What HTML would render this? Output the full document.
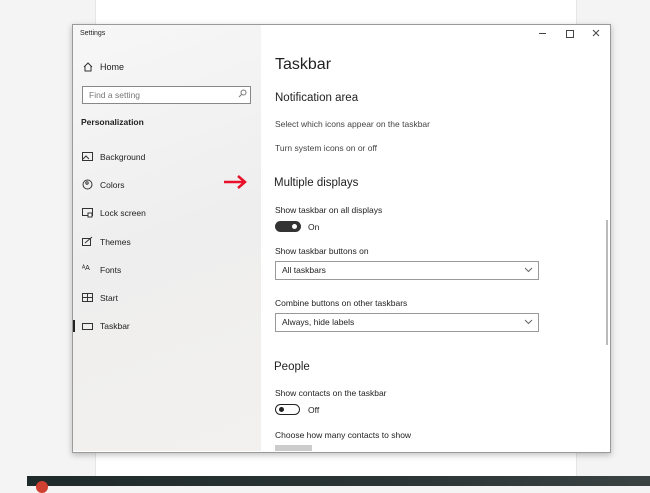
<!DOCTYPE html><html><head><style>
body{margin:0;width:650px;height:486px;background:#f4f4f4;position:relative;overflow:hidden;font-family:"Liberation Sans",sans-serif;color:#222}
.a{position:absolute}
.t{position:absolute;font-size:9px;white-space:nowrap}
</style></head><body>
<div class="a" style="left:95px;top:0;width:480px;height:476px;background:#fff;border-left:1px solid #e6e6e6;border-right:1px solid #e6e6e6"></div>
<div class="a" style="left:27px;top:476px;width:623px;height:10px;background:linear-gradient(90deg,#1f2a2a,#2b3535 60%,#3a4242)"></div>
<div class="a" style="left:36px;top:481px;width:12px;height:12px;border-radius:50%;background:#d04030"></div>
<div class="a" style="left:72px;top:24px;width:537px;height:427px;background:#fff;border:1px solid #9a9a9a;box-shadow:0 2px 6px rgba(0,0,0,.25)"></div>
<div class="a" style="left:73px;top:25px;width:188px;height:426px;background:linear-gradient(160deg,#f7f7f7,#eeeeee 50%,#f3f1ef)"></div>
<div class="t" style="left:80px;top:30px;font-size:7px">Settings</div>
<div class="a" style="left:539px;top:33px;width:7px;height:1px;background:#444"></div>
<div class="a" style="left:566px;top:30px;width:6px;height:6px;border:1px solid #444"></div>
<svg class="a" style="left:592px;top:29px" width="8" height="8"><path d="M1 1L7 7M7 1L1 7" stroke="#444"/></svg>
<svg class="a" style="left:83px;top:62px" width="10" height="10"><path d="M1 5 L5 1 L9 5 M2 4 V9 H8 V4" fill="none" stroke="#333"/></svg>
<div class="t" style="left:100px;top:62px">Home</div>
<div class="a" style="left:82px;top:86px;width:167px;height:16px;border:1px solid #888;background:#fff"></div>
<div class="t" style="left:89px;top:90px;font-size:8.5px;color:#777">Find a setting</div>
<svg class="a" style="left:238px;top:89px" width="9" height="9"><circle cx="5.5" cy="3.5" r="2.5" fill="none" stroke="#777"/><path d="M4 5L1 8" stroke="#777"/></svg>
<div class="t" style="left:81px;top:117px;font-weight:bold;font-size:8.5px">Personalization</div>
<svg class="a" style="left:82px;top:152px" width="11" height="9"><rect x="0.5" y="0.5" width="10" height="8" fill="none" stroke="#333"/><path d="M1 7L4 4L7 7" fill="none" stroke="#333"/></svg><div class="t" style="left:100px;top:152px;font-size:8.5px">Background</div>
<svg class="a" style="left:82px;top:179px" width="11" height="11"><circle cx="5.5" cy="5.5" r="4.5" fill="none" stroke="#333"/><circle cx="5" cy="4" r="1.2" fill="none" stroke="#333"/></svg><div class="t" style="left:100px;top:180px;font-size:8.5px">Colors</div>
<svg class="a" style="left:82px;top:208px" width="11" height="10"><rect x="0.5" y="0.5" width="10" height="7" fill="none" stroke="#333"/><rect x="6" y="5" width="4" height="4" fill="#fff" stroke="#333"/></svg><div class="t" style="left:100px;top:208px;font-size:8.5px">Lock screen</div>
<svg class="a" style="left:82px;top:236px" width="11" height="10"><rect x="0.5" y="2.5" width="8" height="7" fill="none" stroke="#333"/><path d="M3 7L10 1" stroke="#333"/></svg><div class="t" style="left:100px;top:237px;font-size:8.5px">Themes</div>
<div class="t" style="left:82px;top:265px;font-size:7px">ᴬA</div><div class="t" style="left:100px;top:265px;font-size:8.5px">Fonts</div>
<svg class="a" style="left:82px;top:293px" width="11" height="9"><rect x="0.5" y="0.5" width="10" height="8" fill="none" stroke="#333"/><path d="M0 4.5H11M5.5 0V9" stroke="#333"/></svg><div class="t" style="left:100px;top:293px;font-size:8.5px">Start</div>
<div class="a" style="left:73px;top:320px;width:2px;height:12px;background:#222"></div>
<div class="a" style="left:82px;top:323px;width:9px;height:5px;border:1px solid #333"></div><div class="t" style="left:100px;top:321px;font-size:8.5px">Taskbar</div>
<svg class="a" style="left:223px;top:174px" width="25" height="16"><path d="M1 8H22M15 2L22 8L15 14" fill="none" stroke="#e8102a" stroke-width="2.5"/></svg>
<div class="t" style="left:275px;top:56px;font-size:16px">Taskbar</div>
<div class="t" style="left:275px;top:92px;font-size:11.5px">Notification area</div>
<div class="t" style="left:275px;top:119px;font-size:8.5px;color:#444">Select which icons appear on the taskbar</div>
<div class="t" style="left:275px;top:143px;font-size:8.5px;color:#444">Turn system icons on or off</div>
<div class="t" style="left:274px;top:177px;font-size:11.5px">Multiple displays</div>
<div class="t" style="left:275px;top:205px;font-size:8.5px">Show taskbar on all displays</div>
<div class="a" style="left:275px;top:221px;width:26px;height:11px;border-radius:6px;background:#333"></div>
<div class="a" style="left:292px;top:224px;width:5px;height:5px;border-radius:50%;background:#fff"></div>
<div class="t" style="left:308px;top:222px;font-size:8.5px">On</div>
<div class="t" style="left:275px;top:246px;font-size:8.5px">Show taskbar buttons on</div>
<div class="a" style="left:275px;top:261px;width:262px;height:17px;border:1px solid #999"></div>
<div class="t" style="left:282px;top:265px;font-size:8.5px">All taskbars</div>
<svg class="a" style="left:524px;top:267px" width="9" height="6"><path d="M1 1L4.5 4.5L8 1" fill="none" stroke="#666"/></svg>
<div class="t" style="left:275px;top:298px;font-size:8.5px">Combine buttons on other taskbars</div>
<div class="a" style="left:275px;top:313px;width:262px;height:17px;border:1px solid #999"></div>
<div class="t" style="left:282px;top:317px;font-size:8.5px">Always, hide labels</div>
<svg class="a" style="left:524px;top:319px" width="9" height="6"><path d="M1 1L4.5 4.5L8 1" fill="none" stroke="#666"/></svg>
<div class="t" style="left:274px;top:361px;font-size:11.5px">People</div>
<div class="t" style="left:275px;top:388px;font-size:8.5px">Show contacts on the taskbar</div>
<div class="a" style="left:275px;top:404px;width:23px;height:9px;border-radius:6px;border:1.5px solid #222"></div>
<div class="a" style="left:279px;top:407px;width:5px;height:5px;border-radius:50%;background:#222"></div>
<div class="t" style="left:308px;top:405px;font-size:8.5px">Off</div>
<div class="t" style="left:275px;top:430px;font-size:8.5px">Choose how many contacts to show</div>
<div class="a" style="left:275px;top:445px;width:37px;height:6px;background:#ccc"></div>
<div class="a" style="left:606px;top:220px;width:2px;height:125px;background:#bbb"></div>
</body></html>
